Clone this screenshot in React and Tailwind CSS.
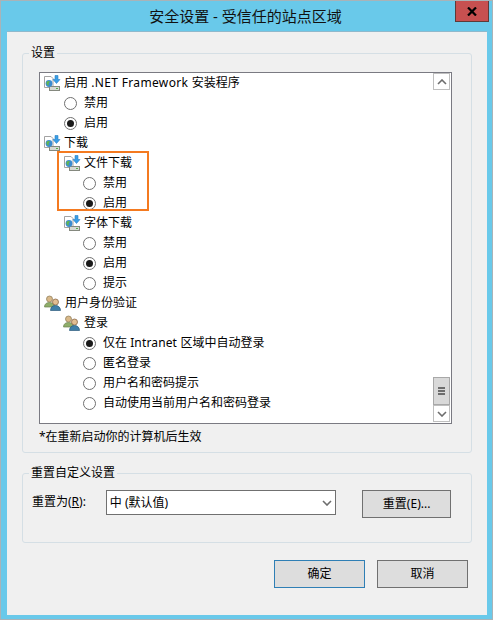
import React from 'react';

const FONT = 'font-["Noto_Sans","Noto_Sans_CJK_SC",sans-serif]';

const NetIcon = () => (
  <svg width="17" height="16" viewBox="0 0 17 16" className="shrink-0">
    <path d="M0.500 1.500h6.500l2 2v9h-8.500z" fill="#fff" stroke="#a3a3a3" strokeWidth="1" />
    <rect x="5.500" y="11.500" width="10" height="4" fill="#d6d9d3" stroke="#85897f" strokeWidth="1" />
    <rect x="12" y="13" width="2" height="1" fill="#55b04a" />
    <circle cx="5" cy="8.500" r="3.400" fill="#3d8cd0" />
    <path d="M2.400 7.200c1-1.300 2.400-1.400 3.200-.7.500.6-.3 1.300-.9 1.500-.2 1 .4 1.500-.2 2.500-1.200-.3-2.200-1.500-2.100-3.300z" fill="#62b552" />
    <path d="M11 0.500h3v4h2l-3.500 4-3.500-4h2z" fill="#3a9ee6" stroke="#2a7fc4" strokeWidth="0.600" />
  </svg>
);

const UsersIcon = () => (
  <svg width="18" height="16" viewBox="0 0 18 16" className="shrink-0">
    <circle cx="5.500" cy="4" r="3" fill="#d9b98a" stroke="#8b7a55" strokeWidth="0.700" />
    <path d="M0.500 12c0-3 2-4.500 5-4.500s5 1.500 5 4.500z" fill="#8fae6a" stroke="#6b7f4e" strokeWidth="0.700" />
    <circle cx="11.500" cy="7" r="3" fill="#e2bd92" stroke="#7c5a3a" strokeWidth="0.700" />
    <path d="M6.500 15.500c0-3 2-5 5-5s5 2 5 5z" fill="#3f7fa8" stroke="#2c5c7c" strokeWidth="0.700" />
  </svg>
);

const Radio = ({ checked }) => (
  <span className="w-[13px] h-[13px] rounded-full border border-[#707070] bg-white flex items-center justify-center shrink-0">
    {checked && <span className="w-[7px] h-[7px] rounded-full bg-[#1a1a1a]" />}
  </span>
);

const rows = [
  { type: 'net', pad: 'pl-1', text: <>启用 <span className="tracking-[0.35px]">.NET Framework </span>安装程序</> },
  { type: 'radio', pad: 'pl-6', text: '禁用' },
  { type: 'radio', pad: 'pl-6', text: '启用', checked: true },
  { type: 'net', pad: 'pl-1', text: '下载' },
  { type: 'net', pad: 'pl-6', text: '文件下载' },
  { type: 'radio', pad: 'pl-[43px]', text: '禁用' },
  { type: 'radio', pad: 'pl-[43px]', text: '启用', checked: true },
  { type: 'net', pad: 'pl-6', text: '字体下载' },
  { type: 'radio', pad: 'pl-[43px]', text: '禁用' },
  { type: 'radio', pad: 'pl-[43px]', text: '启用', checked: true },
  { type: 'radio', pad: 'pl-[43px]', text: '提示' },
  { type: 'users', pad: 'pl-1', text: '用户身份验证' },
  { type: 'users', pad: 'pl-[23px]', text: '登录' },
  { type: 'radio', pad: 'pl-[43px]', text: <>仅在 <span className="tracking-[0.15px]">Intranet </span>区域中自动登录</>, checked: true },
  { type: 'radio', pad: 'pl-[43px]', text: '匿名登录' },
  { type: 'radio', pad: 'pl-[43px]', text: '用户名和密码提示' },
  { type: 'radio', pad: 'pl-[43px]', text: '自动使用当前用户名和密码登录' },
];

const TreeRow = ({ row }) => (
  <div className={`h-5 flex items-center ${row.pad}`}>
    {row.type === 'net' && <NetIcon />}
    {row.type === 'users' && <UsersIcon />}
    {row.type === 'radio' && <Radio checked={row.checked} />}
    <span className={`whitespace-nowrap ${row.type === 'radio' ? 'ml-[7px]' : 'ml-[3px]'}`}>
      {row.text}
    </span>
  </div>
);

const Group = ({ title, className, children }) => (
  <div className={`relative border border-[#d5dfe5] rounded-[3px] ${className}`}>
    <span className="absolute left-[6px] -top-[10px] px-[2px] bg-[#f0f0f0] leading-[18px] whitespace-nowrap">{title}</span>
    {children}
  </div>
);

const Button = ({ children, className }) => (
  <button className={`h-7 border bg-[#dddddd] text-black text-[12px] flex items-center justify-center ${className}`}>
    {children}
  </button>
);

const Chevron = ({ up }) => (
  <svg width="10" height="6" viewBox="0 0 10 6">
    <path d={up ? 'M1 5l4-4 4 4' : 'M1 1l4 4 4-4'} fill="none" stroke="#6d6d6d" strokeWidth="1.600" />
  </svg>
);

const App = () => {
  return (
    <div className={`${FONT} w-[493px] h-[620px] bg-[#69c9ea] border border-[#a9b3b8] flex flex-col text-[12px] text-black overflow-hidden`}>
      <div className="relative h-[30px] shrink-0 flex items-center justify-center">
        <span className="text-[15px] leading-none mt-[1px] -ml-[2px] text-[#111]">安全设置 - 受信任的站点区域</span>
        <div className="absolute top-[-1px] right-[3px] w-[34px] h-[22px] bg-[#c75050] border border-[#5e3a38] flex items-center justify-center">
          <svg width="10" height="9" viewBox="0 0 10 9">
            <path d="M1 0.500l8 8M9 0.500l-8 8" stroke="#000" strokeWidth="2.200" />
          </svg>
        </div>
      </div>

      <div className="ml-[6px] mr-[5px] mb-[4px] flex-1 bg-[#f0f0f0] border-t border-[#8fb9cc] pt-[21px] px-[15px] flex flex-col">
        <Group title="设置" className="h-[400px] pt-[18px] pl-[16px] pr-[19px]">
          <div className="relative h-[352px] border border-[#7a7a82] bg-white flex">
            <div className="flex-1 overflow-hidden">
              {rows.map((row, i) => (
                <TreeRow key={i} row={row} />
              ))}
            </div>
            <div className="w-[17px] mr-[1px] mb-[1px] flex flex-col bg-white">
              <div className="h-[17px] border border-[#bfbfbf] flex items-center justify-center">
                <Chevron up />
              </div>
              <div className="flex-1" />
              <div className="h-[28px] border border-[#a8a8a8] bg-[#d9d9d9] flex flex-col items-center justify-center gap-[1px]">
                <span className="w-[7px] h-[2px] bg-[#6d6d6d]" />
                <span className="w-[7px] h-[2px] bg-[#6d6d6d]" />
                <span className="w-[7px] h-[2px] bg-[#6d6d6d]" />
              </div>
              <div className="h-[17px] border border-[#bfbfbf] flex items-center justify-center">
                <Chevron />
              </div>
            </div>
            <div className="absolute left-[17px] top-[78px] w-[92px] h-[60px] border-2 border-[#f47a20] pointer-events-none" />
          </div>
          <div className="mt-[4px] leading-[18px]">*在重新启动你的计算机后生效</div>
        </Group>

        <Group title="重置自定义设置" className="mt-[20px] h-[70px] pt-[16px] pl-[9px] pr-[20px] flex items-start">
          <span className="w-[74px] leading-[18px] mt-[3px] whitespace-nowrap">
            重置为(<span className="underline">R</span>):
          </span>
          <div className="w-[231px] h-[25px] border border-[#707070] bg-white flex items-center pl-[3px] pr-[3px] justify-between">
            <span className="whitespace-nowrap">中 (默认值)</span>
            <Chevron />
          </div>
          <Button className="ml-[26px] w-[89px] border-[#707070]">
            重置(<span>E</span>)...
          </Button>
        </Group>

        <div className="mt-[17px] flex justify-end gap-[12px] pr-[4px]">
          <Button className="w-[91px] border-[#2f7fb5]">确定</Button>
          <Button className="w-[91px] border-[#707070]">取消</Button>
        </div>
      </div>
    </div>
  );
};

export default App;
